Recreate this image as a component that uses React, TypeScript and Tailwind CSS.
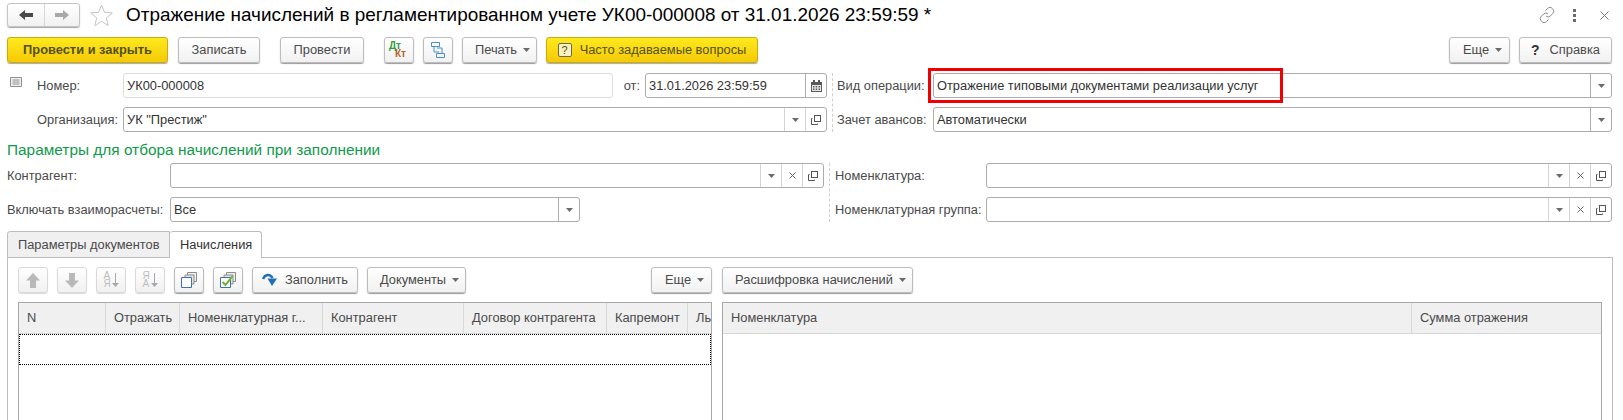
import React from "react";

const arrowDown = (
  <svg width="7" height="4" viewBox="0 0 7 4" className="shrink-0">
    <path d="M0 0h7L3.500 4z" fill="#6b6b6b" />
  </svg>
);

function OpenIcon() {
  return (
    <svg width="12" height="12" viewBox="0 0 12 12" fill="none" stroke="#555" strokeWidth="1">
      <rect x="4.500" y="1.500" width="6" height="6" />
      <path d="M2.500 4.500h-1v6h6v-1" />
    </svg>
  );
}

function CloseSmall() {
  return (
    <svg width="7" height="7" viewBox="0 0 7 7" stroke="#666" strokeWidth="1">
      <path d="M.5.5l6 6M6.500.5l-6 6" />
    </svg>
  );
}

function CalendarIcon() {
  return (
    <svg width="11" height="12" viewBox="0 0 11 12">
      <path d="M0 2h11v10H0z" fill="#5a5a5a" />
      <path d="M2 0h2v3H2zM7 0h2v3H7z" fill="#5a5a5a" />
      <path d="M1 5h9v6H1z" fill="#e8e8e8" />
      <path d="M2 6h1.500v1.500H2zM4.700 6h1.500v1.500H4.700zM7.500 6H9v1.500H7.500zM2 8.500h1.500V10H2zM4.700 8.500h1.500V10H4.700zM7.500 8.500H9V10H7.500z" fill="#5a5a5a" />
    </svg>
  );
}

type Addon = "drop" | "clear" | "open" | "date";

function Input({
  value,
  addons = [],
  className = "",
  light,
}: {
  value?: string;
  addons?: Addon[];
  className?: string;
  light?: boolean;
}) {
  return (
    <div
      className={`flex h-[25px] min-w-0 items-stretch rounded-[3px] border bg-white ${
        light ? "border-[#dcdcdc]" : "border-[#acacac]"
      } ${className}`}
    >
      <div className="flex-1 truncate pl-[3px] leading-[23px] text-[#333]">{value}</div>
      {addons.map((a, i) => (
        <div
          key={i}
          className={`flex w-[21px] shrink-0 items-center justify-center border-l ${
            addons.length === 1 || a === "date" ? "border-[#acacac]" : "border-[#d4d4d4]"
          }`}
        >
          {a === "drop" && arrowDown}
          {a === "clear" && <CloseSmall />}
          {a === "open" && <OpenIcon />}
          {a === "date" && <CalendarIcon />}
        </div>
      ))}
    </div>
  );
}

function Btn({
  children,
  className = "",
  yellow,
  disabled,
}: {
  children: React.ReactNode;
  className?: string;
  yellow?: boolean;
  disabled?: boolean;
}) {
  return (
    <div
      className={`flex h-[26px] shrink-0 items-center justify-center rounded-[3px] border ${
        yellow
          ? "border-[#c9ac12] bg-gradient-to-b from-[#fdea1c] to-[#f5c905] shadow-[0_1px_1px_rgba(0,0,0,0.35)]"
          : disabled
            ? "border-[#d9d9d9] bg-gradient-to-b from-white to-[#f0f0f0] shadow-[0_1px_1px_rgba(0,0,0,0.15)]"
            : "border-[#bdbdbd] bg-gradient-to-b from-white to-[#f1f1f1] shadow-[0_1px_1px_rgba(0,0,0,0.4)]"
      } ${className}`}
    >
      {children}
    </div>
  );
}

function Title() {
  return (
    <div className="flex h-[27px] items-center pl-[7px] pr-[14px] pt-[3px]">
      <div className="flex h-[24px] w-[73px] rounded-[3px] border border-[#c4c4c4] bg-gradient-to-b from-white to-[#f1f1f1] shadow-[0_1px_1px_rgba(0,0,0,0.35)]">
        <div className="flex w-[37px] items-center justify-center border-r border-[#d6d6d6]">
          <svg width="14" height="10" viewBox="0 0 14 10">
            <path d="M0 5l6-5v3h8v4H6v3z" fill="#4a4a4a" />
          </svg>
        </div>
        <div className="flex flex-1 items-center justify-center">
          <svg width="14" height="10" viewBox="0 0 14 10">
            <path d="M14 5L8 0v3H0v4h8v3z" fill="#a9a9a9" />
          </svg>
        </div>
      </div>
      <svg width="23" height="22" viewBox="0 0 23 22" className="ml-[10px]" fill="#fff" stroke="#c4c4c4">
        <path d="M11.500 1l3 7.300 7.800.6-6 5 1.900 7.600-6.700-4.100-6.700 4.100 1.900-7.600-6-5 7.800-.6z" />
      </svg>
      <div className="ml-[13px] text-[18.950px] leading-[24px] text-black">
        Отражение начислений в регламентированном учете УК00-000008 от 31.01.2026 23:59:59 *
      </div>
      <div className="ml-auto flex items-center">
        <svg width="18" height="18" viewBox="0 0 18 18" fill="none" stroke="#8a8a8a" strokeWidth="1" className="mr-[17px]">
          <path d="M7.500 4.500l2-2a3.200 3.200 0 0 1 4.800 0l.5.500a3.200 3.200 0 0 1 0 4.500l-2.500 2.500a3 3 0 0 1-4.300 0" />
          <path d="M10.500 13.500l-2 2a3.200 3.200 0 0 1-4.800 0l-.5-.500a3.200 3.200 0 0 1 0-4.500l2.500-2.500a3 3 0 0 1 4.300 0" />
        </svg>
        <div className="flex flex-col gap-[2px]">
          <div className="h-[3px] w-[3px] bg-[#6b6b6b]" />
          <div className="h-[3px] w-[3px] bg-[#6b6b6b]" />
          <div className="h-[3px] w-[3px] bg-[#6b6b6b]" />
        </div>
        <svg width="9" height="9" viewBox="0 0 9 9" stroke="#777" className="ml-[24px]">
          <path d="M.5.5l8 8M8.500.5l-8 8" />
        </svg>
      </div>
    </div>
  );
}

function Toolbar() {
  return (
    <div className="mt-[10px] flex pl-[7px] pr-[11px] text-[#4a4a4a]">
      <Btn yellow className="w-[161px] font-bold text-[#55501a]">
        Провести и закрыть
      </Btn>
      <Btn className="ml-[10px] w-[82px]">Записать</Btn>
      <Btn className="ml-[20px] w-[84px]">Провести</Btn>
      <Btn className="ml-[20px] w-[30px]">
        <div className="flex w-[20px] flex-col text-[10px] font-bold leading-[8px]">
          <span className="text-[#2f9e44]">Дт</span>
          <span className="pl-[6px] text-[#b5622a]">Кт</span>
        </div>
      </Btn>
      <Btn className="ml-[9px] w-[30px]">
        <svg width="14" height="16" viewBox="0 0 14 16" fill="none" stroke="#4b8ec8">
          <path d="M.5.5h8v4h-8zM5.500 11.500h8v4h-8zM3 4.500v5.500h5M11 11.500V6H6" />
        </svg>
      </Btn>
      <Btn className="ml-[9px] w-[75px] gap-[6px] pl-[6px]">
        Печать {arrowDown}
      </Btn>
      <Btn yellow className="ml-[9px] w-[212px] gap-[8px] text-[#55501a]">
        <span className="flex h-[14px] w-[14px] items-center justify-center rounded-[2px] border border-[#6a6a50] bg-[#f7f2c0] text-[11px] leading-none">
          ?
        </span>
        Часто задаваемые вопросы
      </Btn>
      <Btn className="ml-auto w-[61px] gap-[6px] pl-[6px]">Еще {arrowDown}</Btn>
      <Btn className="ml-[9px] w-[93px] gap-[10px]">
        <span className="text-[14px] font-bold text-[#333]">?</span>
        Справка
      </Btn>
    </div>
  );
}

function Label({ children, className = "" }: { children: React.ReactNode; className?: string }) {
  return <div className={`shrink-0 leading-[25px] text-[#4a4a4a] ${className}`}>{children}</div>;
}

function DashedLine({ className = "" }: { className?: string }) {
  return <div className={`w-0 shrink-0 border-l border-dashed border-[#cfcfcf] ${className}`} />;
}

function MainForm() {
  return (
    <div className="mt-[10px] flex pl-[7px] pr-[11px]">
      <div className="flex w-[820px] shrink-0 flex-col gap-[9px]">
        <div className="flex">
          <div className="flex w-[30px] shrink-0 pl-[3px] pt-[4px]">
            <svg width="12" height="10" viewBox="0 0 12 10" fill="#f1f1f1" stroke="#8f8f8f">
              <path d="M.5.500h11v9H.5zM2.500 3h7M2.500 5h7M2.500 7h7" />
            </svg>
          </div>
          <Label className="w-[86px]">Номер:</Label>
          <Input light value="УК00-000008" className="w-[490px]" />
          <Label className="w-[32px] pr-[5px] text-right">от:</Label>
          <Input value="31.01.2026 23:59:59" addons={["date"]} className="w-[182px]" />
        </div>
        <div className="flex">
          <Label className="ml-[30px] w-[86px]">Организация:</Label>
          <Input value={'УК "Престиж"'} addons={["drop", "open"]} className="flex-1" />
        </div>
      </div>
      <DashedLine className="ml-[5px] mr-[4px]" />
      <div className="flex min-w-0 flex-1 flex-col gap-[9px]">
        <div className="flex">
          <Label className="w-[96px]">Вид операции:</Label>
          <div className="relative min-w-0 flex-1">
            <Input value="Отражение типовыми документами реализации услуг" addons={["drop"]} />
            <div className="pointer-events-none absolute left-[-5px] top-[-5px] h-[35px] w-[355px] border-[3px] border-[#f00000]" />
          </div>
        </div>
        <div className="flex">
          <Label className="w-[96px]">Зачет авансов:</Label>
          <Input value="Автоматически" addons={["drop"]} className="flex-1" />
        </div>
      </div>
    </div>
  );
}

function Filters() {
  return (
    <div className="pl-[7px] pr-[11px]">
      <div className="mt-[7px] h-[24px] text-[15.4px] leading-[22px] text-[#109a4b]">
        Параметры для отбора начислений при заполнении
      </div>
      <div className="flex">
        <div className="flex w-[817px] shrink-0 flex-col gap-[9px]">
          <div className="flex">
            <Label className="w-[163px]">Контрагент:</Label>
            <Input addons={["drop", "clear", "open"]} className="flex-1" />
          </div>
          <div className="flex">
            <Label className="w-[163px]">Включать взаиморасчеты:</Label>
            <Input value="Все" addons={["drop"]} className="w-[410px]" />
          </div>
        </div>
        <DashedLine className="mx-[5px]" />
        <div className="flex min-w-0 flex-1 flex-col gap-[9px]">
          <div className="flex">
            <Label className="w-[151px]">Номенклатура:</Label>
            <Input addons={["drop", "clear", "open"]} className="flex-1" />
          </div>
          <div className="flex">
            <Label className="w-[151px]">Номенклатурная группа:</Label>
            <Input addons={["drop", "clear", "open"]} className="flex-1" />
          </div>
        </div>
      </div>
    </div>
  );
}

function UpIcon({ down }: { down?: boolean }) {
  return (
    <svg width="14" height="15" viewBox="0 0 14 15" className={down ? "rotate-180" : ""}>
      <path d="M7 0l7 7.500H10V15H4V7.500H0z" fill="#b9b9b9" />
    </svg>
  );
}

function SortIcon({ top, bottom }: { top: string; bottom: string }) {
  return (
    <div className="flex items-center gap-[1px] text-[#bdbdbd]">
      <div className="flex flex-col text-[10px] leading-[8px]">
        <span>{top}</span>
        <span>{bottom}</span>
      </div>
      <svg width="7" height="14" viewBox="0 0 7 14">
        <path d="M3 0h1v10h3l-3.500 4L0 10h3z" fill="#a8a8a8" />
      </svg>
    </div>
  );
}

function CopyIcon({ check }: { check?: boolean }) {
  return (
    <svg width="16" height="16" viewBox="0 0 16 16">
      <path d="M6.500.5h9v9h-9z" fill="#eee" stroke="#8d8d8d" />
      <path d="M4 3h9v9H4z" fill="#e2e2e2" stroke="#8d8d8d" />
      <path d="M.5 5.500h10v10H.5z" fill="#fff" stroke="#3f73a8" />
      {check && <path d="M2.500 10l3 3 7-9" fill="none" stroke="#6ab42d" strokeWidth="2" />}
    </svg>
  );
}

function Table({
  columns,
  dotted,
  className = "",
}: {
  columns: { title: string; width?: number }[];
  dotted?: boolean;
  className?: string;
}) {
  return (
    <div className={`mt-[9px] flex-1 overflow-hidden border border-b-0 border-[#a8a8a8] ${className}`}>
      <div className="flex h-[31px] items-stretch overflow-hidden border-b border-[#d8d8d8] bg-[#f0f0f0]">
        {columns.map((c) => (
          <div
            key={c.title}
            style={c.width ? { width: c.width } : undefined}
            className={`shrink-0 whitespace-nowrap border-r border-[#d8d8d8] pl-[8px] leading-[29px] text-[#4a4a4a] last:border-r-0 ${
              c.width ? "" : "flex-1"
            }`}
          >
            {c.title}
          </div>
        ))}
      </div>
      {dotted && <div className="h-[31px] border border-dotted border-black" />}
    </div>
  );
}

function Tabs() {
  return (
    <div className="mt-[9px] pl-[7px] pr-[10px]">
      <div className="flex h-[27px]">
        <div className="w-[163px] rounded-tl-[3px] border border-[#bdbdbd] bg-[#f0f0f0] pl-[10px] leading-[26px] text-[#4a4a4a]">
          Параметры документов
        </div>
        <div className="w-[92px] rounded-t-[3px] border border-b-0 border-l-0 border-[#bdbdbd] pl-[10px] leading-[26px] text-[#333]">
          Начисления
        </div>
        <div className="flex-1 border-b border-[#bdbdbd]" />
      </div>
      <div className="flex h-[162px] gap-[10px] border-x border-[#bdbdbd] px-[10px] pt-[9px] text-[#4a4a4a]">
        <div className="flex w-[694px] shrink-0 flex-col">
          <div className="flex">
            <Btn disabled className="w-[30px]"><UpIcon /></Btn>
            <Btn disabled className="ml-[9px] w-[30px]"><UpIcon down /></Btn>
            <Btn disabled className="ml-[9px] w-[30px]"><SortIcon top="А" bottom="Я" /></Btn>
            <Btn disabled className="ml-[9px] w-[30px]"><SortIcon top="Я" bottom="А" /></Btn>
            <Btn className="ml-[9px] w-[30px]"><CopyIcon /></Btn>
            <Btn className="ml-[9px] w-[30px]"><CopyIcon check /></Btn>
            <Btn className="ml-[9px] w-[106px] gap-[7px]">
              <svg width="16" height="14" viewBox="0 0 16 14">
                <path d="M1 6C3 1 8 .5 10.500 5" fill="none" stroke="#1f6fb5" strokeWidth="2.500" />
                <path d="M5.500 5.500H15L10 13z" fill="#1f6fb5" />
              </svg>
              Заполнить
            </Btn>
            <Btn className="ml-[9px] w-[99px] gap-[6px] pl-[6px]">Документы {arrowDown}</Btn>
            <Btn className="ml-auto w-[61px] gap-[6px] pl-[6px]">Еще {arrowDown}</Btn>
          </div>
          <Table
            dotted
            columns={[
              { title: "N", width: 87 },
              { title: "Отражать", width: 74 },
              { title: "Номенклатурная г...", width: 143 },
              { title: "Контрагент", width: 141 },
              { title: "Договор контрагента", width: 143 },
              { title: "Капремонт", width: 81 },
              { title: "Ль", width: 24 },
            ]}
          />
        </div>
        <div className="flex min-w-0 flex-1 flex-col">
          <div className="flex">
            <Btn className="w-[191px] gap-[6px] pl-[6px]">Расшифровка начислений {arrowDown}</Btn>
          </div>
          <Table
            columns={[
              { title: "Номенклатура", width: 689 },
              { title: "Сумма отражения" },
            ]}
          />
        </div>
      </div>
    </div>
  );
}

export default function App() {
  return (
    <div className="h-[420px] w-[1623px] overflow-hidden bg-white font-['Liberation_Sans',Arial,sans-serif] text-[12.850px]">
      <Title />
      <Toolbar />
      <MainForm />
      <Filters />
      <Tabs />
    </div>
  );
}
